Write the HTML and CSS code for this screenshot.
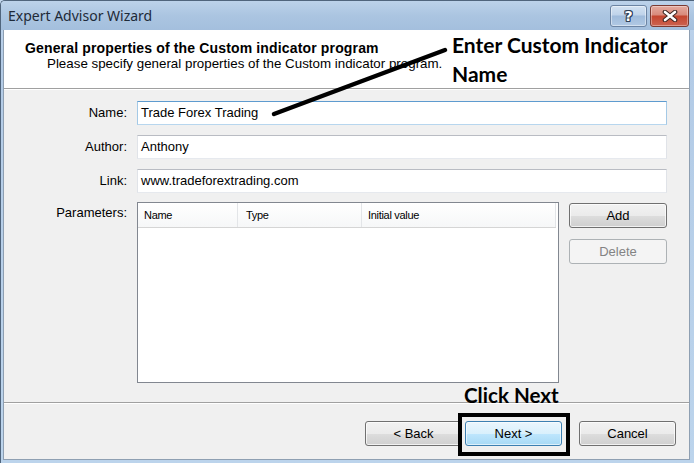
FILE: index.html
```html
<!DOCTYPE html>
<html>
<head>
<meta charset="utf-8">
<link rel="stylesheet" href="styles.css">
</head>
<body>
<div class="window">
  <div class="titlebar">
    <span class="title">Expert Advisor Wizard</span>
    <div class="caption-buttons">
      <div class="cap-btn help"><span class="q">?</span></div>
      <div class="cap-btn close">
        <svg width="16" height="12" viewBox="0 0 16 12">
          <path d="M3 2 L13 10 M13 2 L3 10" stroke="#3a2420" stroke-width="4.6" stroke-linecap="round"/>
          <path d="M3 2 L13 10 M13 2 L3 10" stroke="#ffffff" stroke-width="2.6" stroke-linecap="round"/>
        </svg>
      </div>
    </div>
  </div>
  <div class="client">
    <div class="header">
      <div class="h-title">General properties of the Custom indicator program</div>
      <div class="h-sub">Please specify general properties of the Custom indicator program.</div>
    </div>
    <div class="form">
      <div class="label">Name:</div>
      <div class="input focused">Trade Forex Trading</div>
      <div class="label">Author:</div>
      <div class="input">Anthony</div>
      <div class="label">Link:</div>
      <div class="input">www.tradeforextrading.com</div>
      <div class="label top">Parameters:</div>
      <div class="params">
        <div class="list">
          <div class="list-head">
            <div class="col c1">Name</div>
            <div class="col c2">Type</div>
            <div class="col c3">Initial value</div>
          </div>
        </div>
        <div class="side-buttons">
          <div class="btn">Add</div>
          <div class="btn disabled">Delete</div>
        </div>
      </div>
    </div>
    <div class="footer">
      <div class="btn">&lt; Back</div>
      <div class="btn default">Next &gt;</div>
      <div class="btn cancel">Cancel</div>
    </div>
  </div>
  <svg class="arrow" width="200" height="90" viewBox="0 0 200 90">
    <path d="M5 69 L176 5" stroke="#000" stroke-width="4.5" stroke-linecap="round"/>
  </svg>
  <div class="note note-name">Enter Custom Indicator<br>Name</div>
  <div class="note note-next">Click Next</div>
  <div class="highlight"></div>
</div>
</body>
</html>
```
FILE: styles.css
```css
html, body {
  margin: 0;
  padding: 0;
}
body {
  width: 694px;
  height: 463px;
  overflow: hidden;
  background: #c2d7ee;
  font-family: "Liberation Sans", Arial, sans-serif;
  font-size: 13px;
  color: #000;
}
.window {
  position: relative;
  width: 694px;
  height: 463px;
  box-sizing: border-box;
  border-left: 1px solid #50657d;
  border-top: 1px solid #50657d;
  border-top-left-radius: 5px;
  background: linear-gradient(#c2d7ee, #b3cbe6 60px, #bcd4ec);
  display: flex;
  flex-direction: column;
}
.titlebar {
  height: 29px;
  flex: none;
  display: flex;
  align-items: flex-start;
  justify-content: space-between;
  background: linear-gradient(#bcd2ea, #abc5e1 50%, #a4bfdd);
  border-top-left-radius: 4px;
}
.title {
  font-family: "Noto Sans", "Open Sans", sans-serif;
  font-size: 14px;
  line-height: 18px;
  margin: 6px 0 0 7px;
  color: #1e2a38;
}
.caption-buttons {
  display: flex;
  gap: 3px;
  margin: 4px 5px 0 0;
}
.cap-btn {
  height: 22px;
  border-radius: 3px;
  display: flex;
  align-items: center;
  justify-content: center;
  box-sizing: border-box;
}
.help {
  width: 37px;
  border: 1px solid #6c84a3;
  background: linear-gradient(#d3e2f2, #bfd3ea 45%, #9fbbdb 50%, #b1c9e4);
  box-shadow: inset 0 0 0 1px rgba(255,255,255,0.45);
}
.q {
  font-family: "DejaVu Sans", sans-serif;
  font-weight: bold;
  font-size: 14px;
  line-height: 14px;
  color: #fff;
  text-shadow: -1px 0 #2f3f55, 1px 0 #2f3f55, 0 -1px #2f3f55, 0 1px #2f3f55, 1px 1px #2f3f55, -1px -1px #2f3f55, 1px -1px #2f3f55, -1px 1px #2f3f55;
}
.close {
  width: 39px;
  border: 1px solid #7b3a32;
  background: linear-gradient(#e4aa9f, #d88a7b 45%, #c4452f 50%, #cc6350);
  box-shadow: inset 0 0 0 1px rgba(255,255,255,0.35);
}
.client {
  flex: 1;
  margin: 0 4px 3px 2px;
  border-left: 1px solid #8e9fb2;
  border-right: 1px solid #8e9fb2;
  border-bottom: 1px solid #8e9fb2;
  background: #f0f0f0;
  display: flex;
  flex-direction: column;
  min-height: 0;
}
.header {
  height: 59px;
  flex: none;
  box-sizing: border-box;
  background: #fff;
  border-bottom: 1px solid #a0a0a0;
  padding: 10px 0 0 21px;
}
.h-title {
  font-weight: bold;
  font-size: 14px;
  letter-spacing: 0.15px;
  line-height: 16px;
}
.h-sub {
  font-size: 13.35px;
  line-height: 16px;
  padding-left: 22px;
}
.form {
  display: grid;
  grid-template-columns: 123px 1fr;
  column-gap: 10px;
  row-gap: 10px;
  padding: 11px 22px 0 0;
  border-top: 1px solid #fff;
}
.label {
  text-align: right;
  line-height: 24px;
}
.label.top {
  line-height: 16px;
  padding-top: 2px;
}
.input {
  height: 24px;
  box-sizing: border-box;
  background: #fff;
  border: 1px solid;
  border-color: #b9bcc3 #e0e3e8 #e6e9ee #e0e3e8;
  padding: 0 3px;
  line-height: 22px;
}
.input.focused {
  border-color: #5e9bcf #a4c9e6 #b7d6ee #a4c9e6;
}
.params {
  display: flex;
  gap: 10px;
  margin-top: -1px;
}
.list {
  flex: 1;
  height: 181px;
  box-sizing: border-box;
  background: #fff;
  border: 1px solid #828790;
}
.list-head {
  display: flex;
  height: 24px;
  border-bottom: 1px solid #d5d5d5;
  background: linear-gradient(#ffffff, #f6f7f8);
  margin-right: 2px;
  font-size: 11px;
  letter-spacing: -0.3px;
}
.col {
  box-sizing: border-box;
  padding-left: 6px;
  line-height: 24px;
  border-right: 1px solid #e3e5e8;
}
.c1 { width: 100px; }
.c2 { width: 124px; padding-left: 8px; }
.c3 { flex: 1; }
.side-buttons {
  width: 98px;
  display: flex;
  flex-direction: column;
  gap: 11px;
  padding-top: 1px;
}
.btn {
  height: 25px;
  box-sizing: border-box;
  border: 1px solid #707070;
  border-radius: 3px;
  background: linear-gradient(#f2f2f2, #ebebeb 50%, #dddddd 51%, #cfcfcf);
  box-shadow: inset 0 0 0 1px rgba(255,255,255,0.7);
  text-align: center;
  line-height: 23px;
}
.btn.disabled {
  border-color: #adb2b5;
  background: #f4f4f4;
  color: #838383;
  box-shadow: none;
}
.btn.default {
  border-color: #3c7fb1;
  background: linear-gradient(#eaf6fd, #d9f0fc 50%, #bee6fd 51%, #a7d9f5);
  box-shadow: inset 0 0 0 1px rgba(255,255,255,0.6);
}
.footer {
  margin-top: auto;
  height: 57px;
  box-sizing: border-box;
  border-top: 1px solid #a0a0a0;
  box-shadow: inset 0 1px 0 #fff;
  display: flex;
  justify-content: flex-end;
  align-items: flex-start;
  gap: 3px;
  padding: 18px 13px 0 0;
}
.footer .btn {
  width: 97px;
}
.footer .btn.cancel {
  margin-left: 14px;
}
.arrow {
  position: absolute;
  left: 268px;
  top: 44px;
}
.note {
  position: absolute;
  font-family: Lato, "Open Sans", sans-serif;
  font-weight: bold;
  font-size: 21px;
  color: #000;
}
.note-name {
  left: 451px;
  top: 29px;
  line-height: 29px;
}
.note-next {
  left: 463px;
  top: 381px;
  line-height: 26px;
  font-size: 20.6px;
}
.highlight {
  position: absolute;
  left: 457px;
  top: 412px;
  width: 112px;
  height: 43px;
  box-sizing: border-box;
  border: 4px solid #000;
}
```
